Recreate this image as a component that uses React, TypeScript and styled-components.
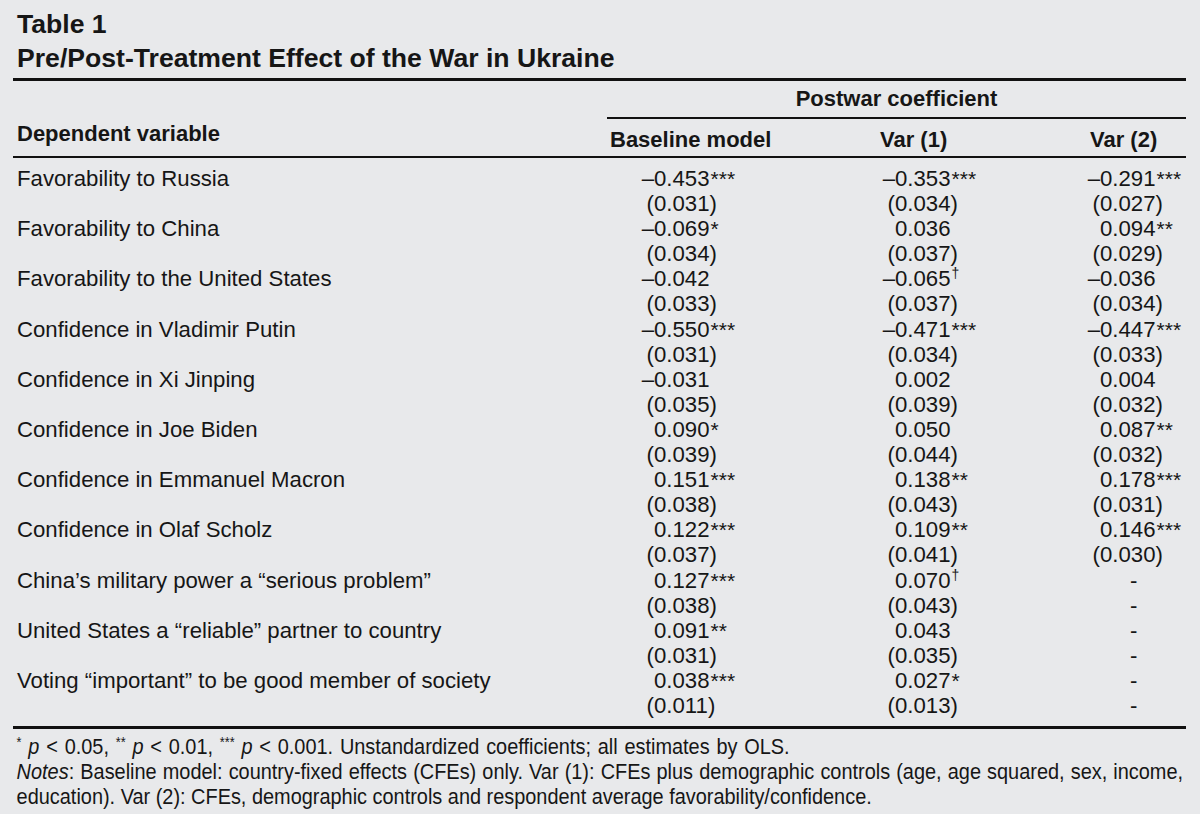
import React from "react";
import styled, { createGlobalStyle } from "styled-components";

const Global = createGlobalStyle`
  html, body { margin: 0; padding: 0; background: #e8e9eb; }
  body { font-family: "Liberation Sans", Arial, Helvetica, sans-serif; color: #161616; }
`;

const Page = styled.div`
  width: 1200px;
  height: 814px;
  box-sizing: border-box;
  padding: 7px 14px 0 13px;
  overflow: hidden;
`;

const TitleBlock = styled.div`
  padding-left: 4px;
`;

const TitleLine = styled.div`
  font-size: 26.6px;
  font-weight: 700;
  line-height: 34px;
  white-space: nowrap;
`;

const Rule = styled.div<{ $h: number; $mt?: number }>`
  height: ${(p) => p.$h}px;
  margin-top: ${(p) => p.$mt ?? 0}px;
  background: #111;
`;

const COLS = "594px 250px 210px 1fr";

const HeaderGrid = styled.div`
  display: grid;
  grid-template-columns: ${COLS};
  border-bottom: 2px solid #111;
  font-size: 22px;
  font-weight: 700;
  line-height: 25px;
`;

const DepVar = styled.div`
  grid-column: 1;
  grid-row: 1 / span 2;
  align-self: end;
  padding: 0 0 10px 4px;
  white-space: nowrap;
`;

const Spanner = styled.div`
  grid-column: 2 / span 3;
  grid-row: 1;
  text-align: center;
  padding: 5px 0 6px;
  border-bottom: 2px solid #111;
`;

const ColHead = styled.div<{ $indent: number }>`
  grid-row: 2;
  padding: 8px 0 4px ${(p) => p.$indent}px;
  white-space: nowrap;
`;

const BodyGrid = styled.div`
  display: grid;
  grid-template-columns: ${COLS};
  grid-auto-rows: 25.1px;
  padding: 8px 0 8px;
  font-size: 22.2px;
  line-height: 25px;
`;

const Label = styled.div`
  grid-column: 1;
  padding-left: 4px;
  white-space: nowrap;
`;

const Cell = styled.div<{ $indent: number }>`
  padding-left: ${(p) => p.$indent}px;
  white-space: nowrap;
`;

const Prefix = styled.span`
  display: inline-block;
  width: 13px;
  text-align: right;
`;

const Stars = styled.span`
  font-size: 21px;
  margin-left: 1px;
`;

const Dagger = styled.span`
  font-size: 14px;
  line-height: 0;
  vertical-align: 8px;
  margin-left: 1px;
`;

const Notes = styled.div`
  padding: 5px 0 0 4px;
  font-size: 22px;
  line-height: 25px;
  transform: scaleX(0.905);
  transform-origin: left top;
`;

const NoteLine = styled.div<{ $ws?: number }>`
  white-space: nowrap;
  word-spacing: ${(p) => p.$ws ?? 0}px;
`;

const NoteStar = styled.span`
  font-size: 14px;
  line-height: 0;
  vertical-align: 7px;
`;

type V = { c: string; s?: string; se: string } | null;
type Row = { label: string; v: [V, V, V] };

const rows: Row[] = [
  { label: "Favorability to Russia", v: [{ c: "–0.453", s: "***", se: "(0.031)" }, { c: "–0.353", s: "***", se: "(0.034)" }, { c: "–0.291", s: "***", se: "(0.027)" }] },
  { label: "Favorability to China", v: [{ c: "–0.069", s: "*", se: "(0.034)" }, { c: "0.036", se: "(0.037)" }, { c: "0.094", s: "**", se: "(0.029)" }] },
  { label: "Favorability to the United States", v: [{ c: "–0.042", se: "(0.033)" }, { c: "–0.065", s: "†", se: "(0.037)" }, { c: "–0.036", se: "(0.034)" }] },
  { label: "Confidence in Vladimir Putin", v: [{ c: "–0.550", s: "***", se: "(0.031)" }, { c: "–0.471", s: "***", se: "(0.034)" }, { c: "–0.447", s: "***", se: "(0.033)" }] },
  { label: "Confidence in Xi Jinping", v: [{ c: "–0.031", se: "(0.035)" }, { c: "0.002", se: "(0.039)" }, { c: "0.004", se: "(0.032)" }] },
  { label: "Confidence in Joe Biden", v: [{ c: "0.090", s: "*", se: "(0.039)" }, { c: "0.050", se: "(0.044)" }, { c: "0.087", s: "**", se: "(0.032)" }] },
  { label: "Confidence in Emmanuel Macron", v: [{ c: "0.151", s: "***", se: "(0.038)" }, { c: "0.138", s: "**", se: "(0.043)" }, { c: "0.178", s: "***", se: "(0.031)" }] },
  { label: "Confidence in Olaf Scholz", v: [{ c: "0.122", s: "***", se: "(0.037)" }, { c: "0.109", s: "**", se: "(0.041)" }, { c: "0.146", s: "***", se: "(0.030)" }] },
  { label: "China’s military power a “serious problem”", v: [{ c: "0.127", s: "***", se: "(0.038)" }, { c: "0.070", s: "†", se: "(0.043)" }, null] },
  { label: "United States a “reliable” partner to country", v: [{ c: "0.091", s: "**", se: "(0.031)" }, { c: "0.043", se: "(0.035)" }, null] },
  { label: "Voting “important” to be good member of society", v: [{ c: "0.038", s: "***", se: "(0.011)" }, { c: "0.027", s: "*", se: "(0.013)" }, null] },
];

const INDENTS = [34, 25, 20];
const DASH_INDENT = 63;

function Num({ text, sup }: { text: string; sup?: string }) {
  const first = text.charAt(0);
  const hasPrefix = first === "–" || first === "(";
  return (
    <>
      <Prefix>{hasPrefix ? first : ""}</Prefix>
      {hasPrefix ? text.slice(1) : text}
      {sup === "†" ? <Dagger>†</Dagger> : sup ? <Stars>{sup}</Stars> : null}
    </>
  );
}

export default function App() {
  return (
    <>
      <Global />
      <Page>
        <TitleBlock>
          <TitleLine>Table 1</TitleLine>
          <TitleLine>Pre/Post-Treatment Effect of the War in Ukraine</TitleLine>
        </TitleBlock>
        <Rule $h={3} $mt={3} />
        <HeaderGrid>
          <DepVar>Dependent variable</DepVar>
          <Spanner>Postwar coefficient</Spanner>
          <ColHead $indent={3}>Baseline model</ColHead>
          <ColHead $indent={23}>Var (1)</ColHead>
          <ColHead $indent={23}>Var (2)</ColHead>
        </HeaderGrid>
        <BodyGrid>
          {rows.map((r) => (
            <React.Fragment key={r.label}>
              <Label>{r.label}</Label>
              {r.v.map((v, i) => (
                <Cell key={"c" + i} $indent={v ? INDENTS[i] : DASH_INDENT}>
                  {v ? <Num text={v.c} sup={v.s} /> : "-"}
                </Cell>
              ))}
              <Label />
              {r.v.map((v, i) => (
                <Cell key={"s" + i} $indent={v ? INDENTS[i] : DASH_INDENT}>
                  {v ? <Num text={v.se} /> : "-"}
                </Cell>
              ))}
            </React.Fragment>
          ))}
        </BodyGrid>
        <Rule $h={3} />
        <Notes>
          <NoteLine $ws={1.4}>
            <NoteStar>*</NoteStar> <i>p</i> &lt; 0.05, <NoteStar>**</NoteStar> <i>p</i> &lt; 0.01,{" "}
            <NoteStar>***</NoteStar> <i>p</i> &lt; 0.001. Unstandardized coefficients; all estimates by OLS.
          </NoteLine>
          <NoteLine $ws={0.65}>
            <i>Notes</i>: Baseline model: country-fixed effects (CFEs) only. Var (1): CFEs plus demographic controls (age, age squared, sex, income,
          </NoteLine>
          <NoteLine>education). Var (2): CFEs, demographic controls and respondent average favorability/confidence.</NoteLine>
        </Notes>
      </Page>
    </>
  );
}
